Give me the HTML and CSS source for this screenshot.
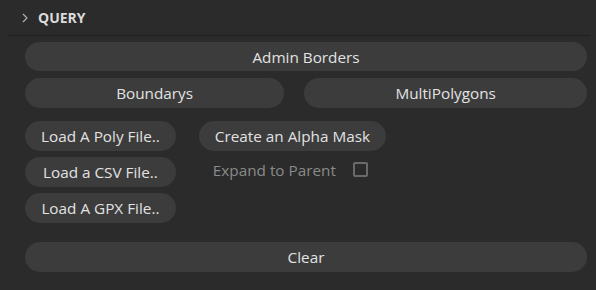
FILE: index.html
```html
<!DOCTYPE html>
<html lang="en">
<head>
    <meta charset="UTF-8">
    <title>Query</title>
    <link rel="stylesheet" href="styles.css">
</head>
<body>
    <div class="panel">
        <div class="panel-header">
            <svg class="chevron" width="8" height="10" viewBox="0 0 8 10">
                <path d="M2 1 L6 5 L2 9" fill="none" stroke="#b0b0b0" stroke-width="1.2"/>
            </svg>
            <span class="panel-title">QUERY</span>
        </div>
        <div class="panel-body">
            <button class="btn btn-admin">Admin Borders</button>
            <div class="row-split">
                <button class="btn">Boundarys</button>
                <button class="btn">MultiPolygons</button>
            </div>
            <div class="row-files">
                <div class="col col-load">
                    <button class="btn">Load A Poly File..</button>
                    <button class="btn">Load a CSV File..</button>
                    <button class="btn">Load A GPX File..</button>
                </div>
                <div class="col">
                    <button class="btn">Create an Alpha Mask</button>
                    <label class="check">
                        <span>Expand to Parent</span>
                        <span class="box"></span>
                    </label>
                </div>
            </div>
            <button class="btn btn-clear">Clear</button>
        </div>
    </div>
</body>
</html>
```

FILE: styles.css
```css
body {
    margin: 0;
    background: #2b2b2b;
    font-family: 'Open Sans', 'Noto Sans', sans-serif;
    color: #e2e2e2;
}

.panel {
    width: 596px;
    height: 290px;
}

.panel-header {
    display: flex;
    align-items: center;
    height: 36px;
    margin: 0 6px 0 7px;
    padding-left: 14px;
    border-bottom: 1px solid #1f1f1f;
    box-sizing: border-box;
}

.chevron {
    margin-right: 9px;
}

.panel-title {
    font-weight: 700;
    font-size: 14px;
    color: #dcdcdc;
}

.panel-body {
    display: flex;
    flex-direction: column;
    padding: 6px 9px 0 25px;
}

.btn {
    height: 30px;
    border: none;
    border-radius: 15px;
    background: #3c3c3c;
    color: #e2e2e2;
    font-family: inherit;
    font-size: 15.3px;
    padding: 0 16px;
    cursor: pointer;
}

.btn-admin {
    height: 29px;
}

.row-split {
    display: flex;
    gap: 20px;
    margin-top: 7px;
}

.row-split .btn {
    flex: 1 1 auto;
}

.row-files {
    display: flex;
    align-items: flex-start;
    gap: 23px;
    margin-top: 13px;
}

.col {
    display: flex;
    flex-direction: column;
    gap: 6px;
    align-items: flex-start;
}

.col-load {
    align-items: stretch;
}

.check {
    display: flex;
    align-items: center;
    gap: 17px;
    height: 25px;
    padding-left: 14px;
    color: #8a8a8a;
    font-size: 15.3px;
}

.box {
    width: 11px;
    height: 11px;
    border: 2px solid #6a6a6a;
    border-radius: 2px;
}

.btn-clear {
    margin-top: 19px;
}
```
